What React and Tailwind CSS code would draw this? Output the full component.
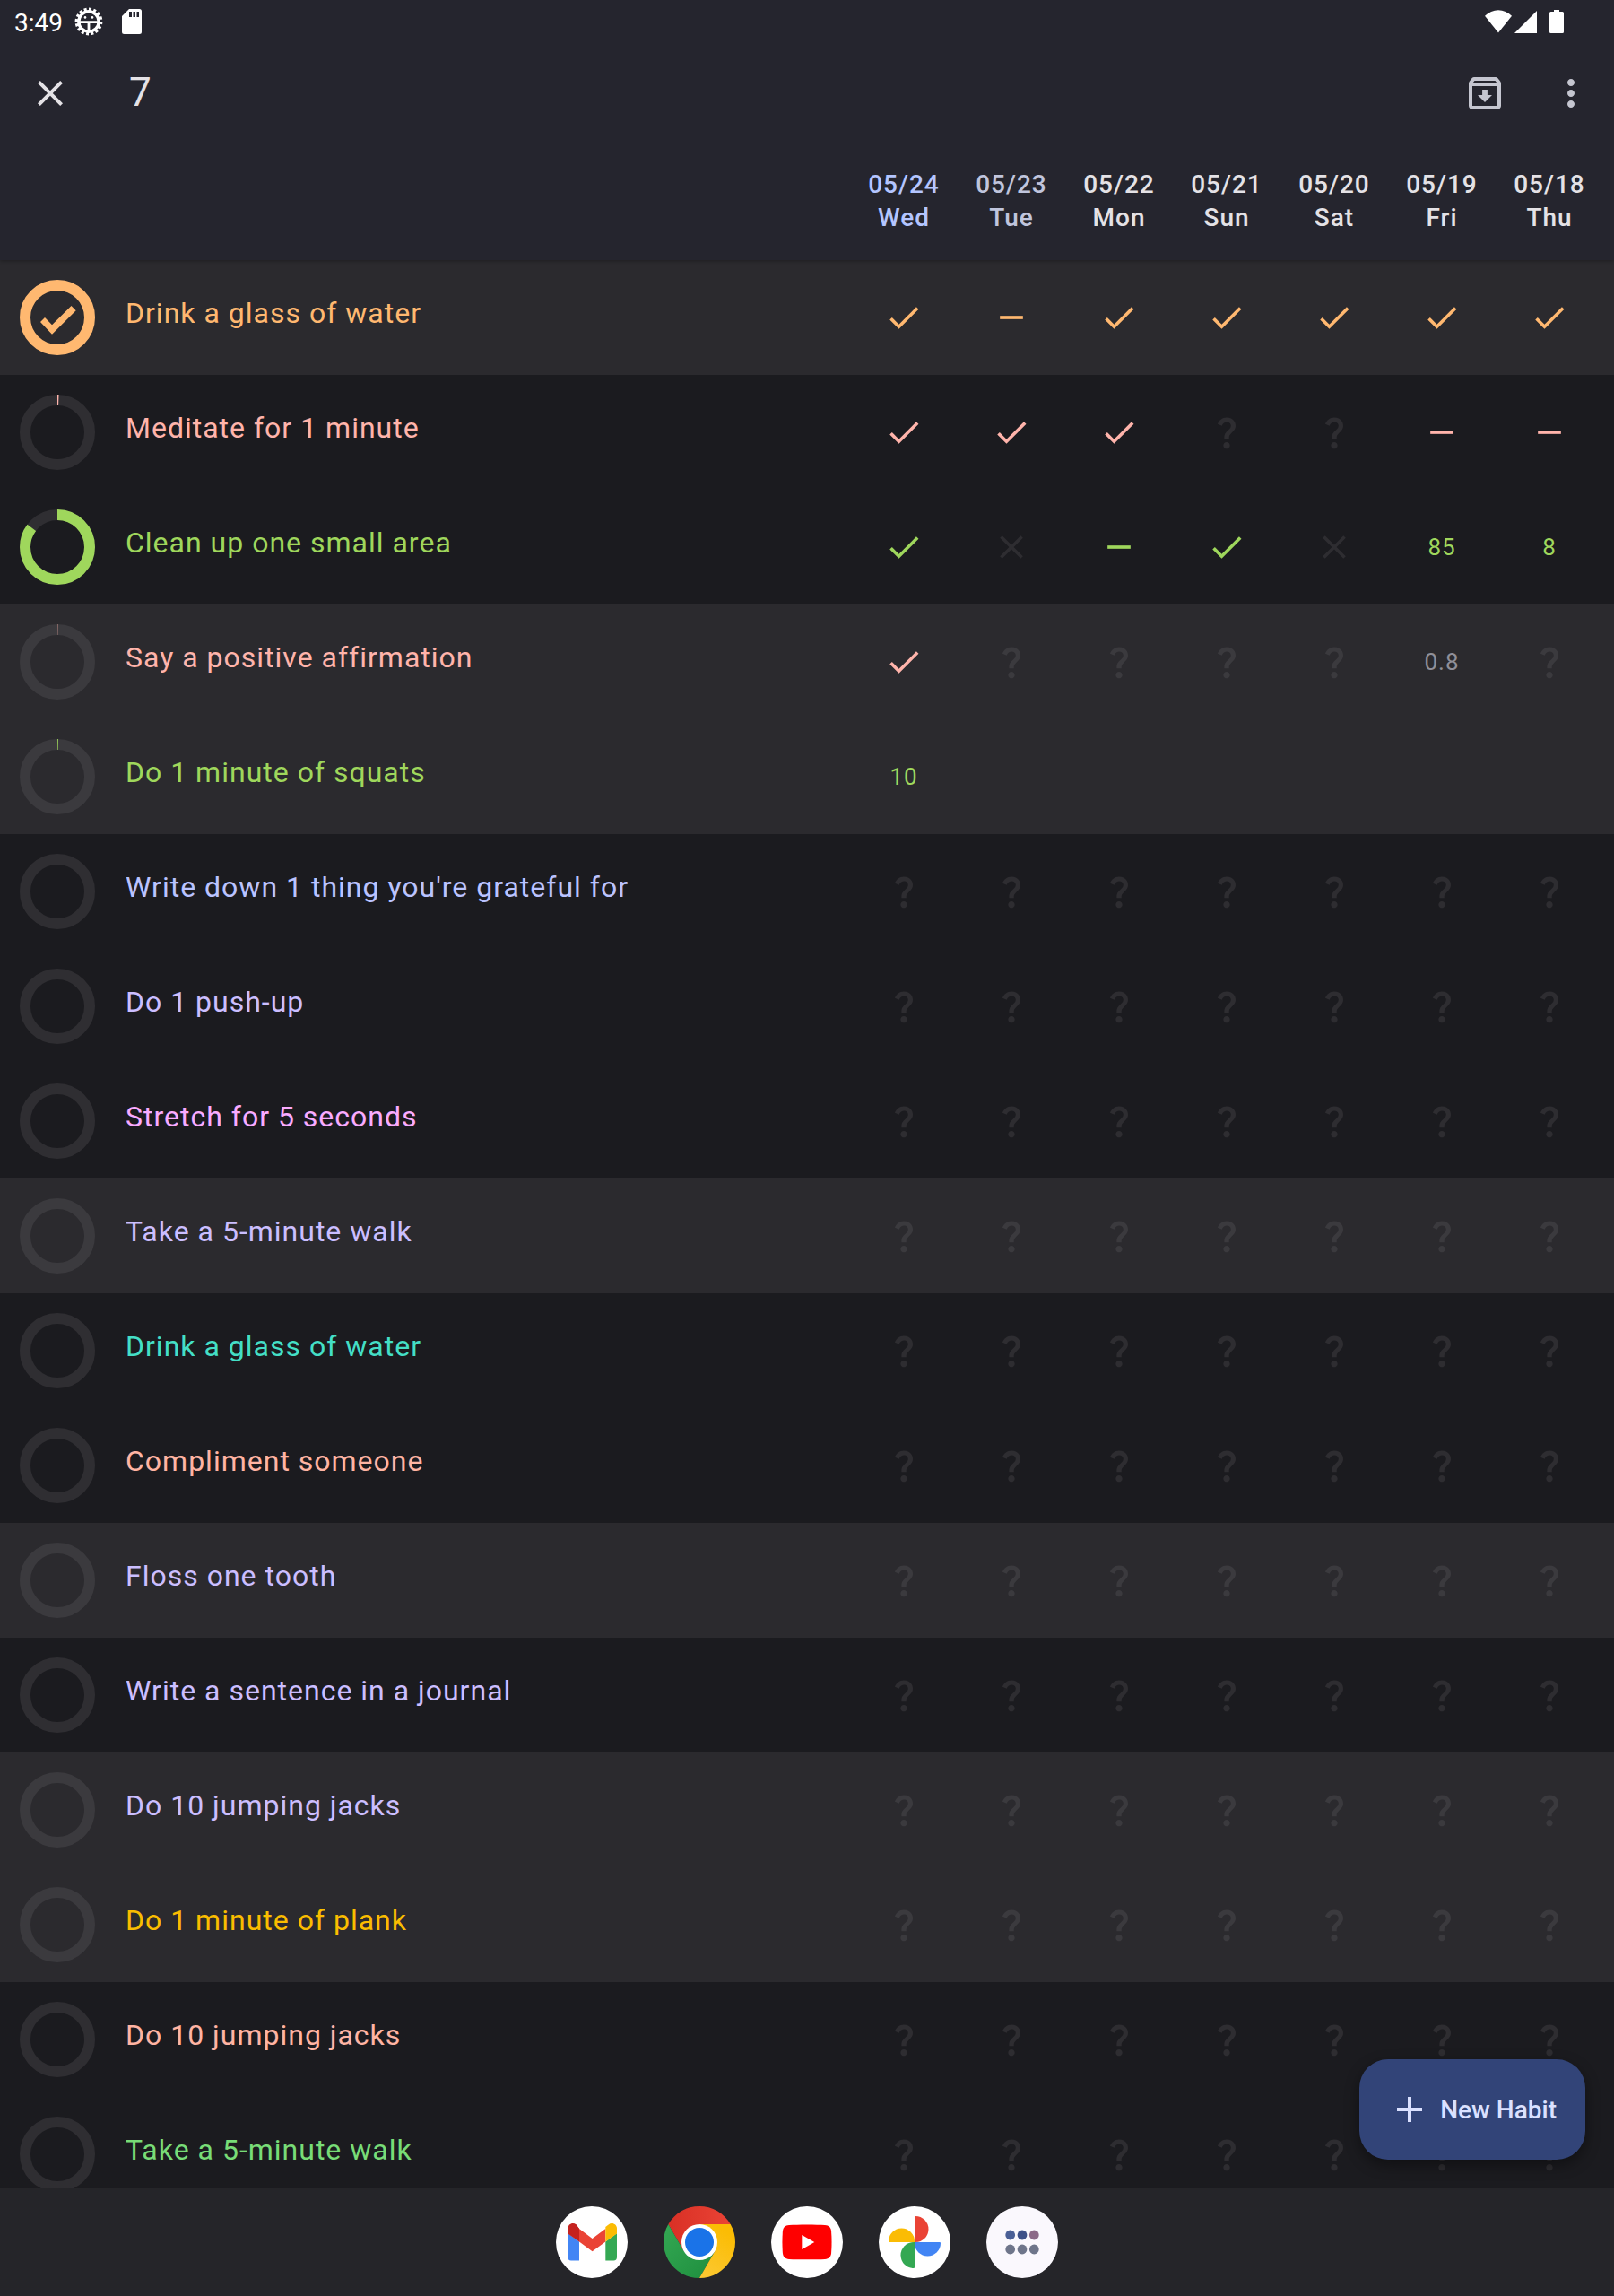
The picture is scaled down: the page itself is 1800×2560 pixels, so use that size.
import React from "react";
import { MdAdd, MdCheck, MdClose, MdMoreVert, MdOutlineArchive, MdQuestionMark, MdRemove } from "react-icons/md";

const days = [
  { date: "05/24", name: "Wed", tone: "text-[#b4c5ff]" },
  { date: "05/23", name: "Tue", tone: "text-[#c0c5dd]" },
  { date: "05/22", name: "Mon", tone: "text-[#e4e2e6]" },
  { date: "05/21", name: "Sun", tone: "text-[#e4e2e6]" },
  { date: "05/20", name: "Sat", tone: "text-[#e4e2e6]" },
  { date: "05/19", name: "Fri", tone: "text-[#e4e2e6]" },
  { date: "05/18", name: "Thu", tone: "text-[#e4e2e6]" },
];

const unknown = ["?", "?", "?", "?", "?", "?", "?"];

const habits = [
  { name: "Drink a glass of water", tone: "text-[#ffb870]", selected: true, progress: 100, entries: ["v", "-", "v", "v", "v", "v", "v"] },
  { name: "Meditate for 1 minute", tone: "text-[#ffb4ab]", progress: 0.6, entries: ["v", "v", "v", "?", "?", "-", "-"] },
  { name: "Clean up one small area", tone: "text-[#9fd75c]", progress: 85.3, entries: ["v", "x", "-", "v", "x", "85", "8"] },
  { name: "Say a positive affirmation", tone: "text-[#ffb4ab]", selected: true, progress: 0.15, entries: ["v", "?", "?", "?", "?", "0.8", "?"] },
  { name: "Do 1 minute of squats", tone: "text-[#9fd75c]", selected: true, progress: 0.35, entries: ["10", "", "", "", "", "", ""] },
  { name: "Write down 1 thing you're grateful for", tone: "text-[#bac3ff]", entries: unknown },
  { name: "Do 1 push-up", tone: "text-[#cbbeff]", entries: unknown },
  { name: "Stretch for 5 seconds", tone: "text-[#f9abff]", entries: unknown },
  { name: "Take a 5-minute walk", tone: "text-[#cbbeff]", selected: true, entries: unknown },
  { name: "Drink a glass of water", tone: "text-[#44dfc6]", entries: unknown },
  { name: "Compliment someone", tone: "text-[#ffb4a3]", entries: unknown },
  { name: "Floss one tooth", tone: "text-[#cbbeff]", selected: true, entries: unknown },
  { name: "Write a sentence in a journal", tone: "text-[#cbbeff]", entries: unknown },
  { name: "Do 10 jumping jacks", tone: "text-[#cbbeff]", selected: true, entries: unknown },
  { name: "Do 1 minute of plank", tone: "text-[#fabd00]", selected: true, entries: unknown },
  { name: "Do 10 jumping jacks", tone: "text-[#ffb4a3]", entries: unknown },
  { name: "Take a 5-minute walk", tone: "text-[#78dc77]", entries: unknown },
];

function ProgressRing({ value = 0, selected }) {
  return (
    <svg viewBox="0 0 84 84" className="size-[84px] shrink-0" aria-hidden="true">
      <circle cx="42" cy="42" r="36" fill="none" strokeWidth="12" className={selected ? "stroke-[#3b3a3e]" : "stroke-[#2f2e32]"} />
      {value > 0 && (
        <circle cx="42" cy="42" r="36" fill="none" stroke="currentColor" strokeWidth="12" pathLength="100" strokeDasharray={`${value} 100`} transform="rotate(-90 42 42)" />
      )}
      {value === 100 && <path d="M23 47l5-5 8 8.3L57.5 29l5.2 5.3L36 60.7z" fill="currentColor" />}
    </svg>
  );
}

const icons = {
  v: { Icon: MdCheck, label: "done" },
  "-": { Icon: MdRemove, label: "skipped" },
  x: { Icon: MdClose, label: "missed" },
  "?": { Icon: MdQuestionMark, label: "no entry" },
};

function Entry({ value, habit, day }) {
  const muted = habit.selected ? "text-[#3b3a3e]" : "text-[#2e2d31]";
  const icon = icons[value];
  let tone = habit.tone;
  if (value === "?" || value === "x") tone = muted;
  if (value === "0.8") tone = "text-[#8f8f99]";
  return (
    <button
      type="button"
      aria-label={`${habit.name}, ${day.date}: ${icon ? icon.label : value || "empty"}`}
      className={`flex h-32 w-full items-center justify-center text-[26px] leading-8 tracking-[1px] ${tone}`}
    >
      {icon ? <icon.Icon className="size-11" /> : value}
    </button>
  );
}

function StatusBar() {
  return (
    <div className="flex h-12 shrink-0 items-center justify-between pl-4 pr-14 text-white">
      <div className="flex items-center">
        <span className="pt-[3px] text-[28px] leading-8">3:49</span>
        <svg viewBox="0 0 32 32" className="ml-[13px] size-8" fill="none" stroke="currentColor" aria-hidden="true">
          <circle cx="16" cy="16" r="13.6" strokeWidth="3.6" pathLength="128" strokeDasharray="4.400 3.600" />
          <circle cx="16" cy="16" r="11.2" strokeWidth="3.4" />
          <path d="M6 16.6h20M16 16.6V27" strokeWidth="2.8" />
          <circle cx="12" cy="11.4" r="1.3" fill="currentColor" stroke="none" />
          <circle cx="20" cy="11.4" r="1.3" fill="currentColor" stroke="none" />
        </svg>
        <svg viewBox="0 0 22 28" className="ml-[21px] h-7 w-[22px]" fill="currentColor" aria-hidden="true">
          <path fillRule="evenodd" d="M8 0h11.500Q22 0 22 2.500v23Q22 28 19.500 28h-17Q0 28 0 25.500V8zM8 3v6h3V3zM12.500 3v6h2.500V3zM16.500 3v6H19V3z" />
        </svg>
      </div>
      <div className="flex items-center">
        <svg viewBox="0 0 30 26" className="h-[26px] w-[30px]" fill="currentColor" aria-hidden="true">
          <path d="M0 6.800C8.500-2 21.500-2 30 6.800L15 25.500z" />
        </svg>
        <svg viewBox="0 0 26 26" className="ml-[2px] size-[26px]" fill="currentColor" aria-hidden="true">
          <path d="M26 1v25H1z" />
        </svg>
        <svg viewBox="0 0 16 26" className="ml-[14px] h-[26px] w-4" fill="currentColor" aria-hidden="true">
          <path d="M5 0h6v2h3.500Q16 2 16 3.500v21q0 1.500-1.500 1.500h-13Q0 26 0 24.500v-21Q0 2 1.500 2H5z" />
        </svg>
      </div>
    </div>
  );
}

function Gmail() {
  return (
    <svg viewBox="0 0 80 80" className="size-20">
      <circle cx="40" cy="40" r="40" fill="#fff" />
      <path d="M13.300 30L26 39.500v21h-9q-3.700 0-3.700-3.700z" fill="#4285f4" />
      <path d="M68 30l-12.700 9.500v21h9q3.700 0 3.700-3.700z" fill="#34a853" />
      <path d="M26 25l14.600 11 14.700-11v14.600L40.600 50.300 26 39.600z" fill="#ea4335" />
      <path d="M13.300 25c0-5 5.400-7.600 9.400-4.600L26 25v14.600l-12.700-9z" fill="#c5221f" />
      <path d="M22 20l4 5v6l-6-8z" fill="#c5221f" />
      <path d="M68 25c0-5-5.400-7.600-9.400-4.600L55.300 23v16.600l12.700-9z" fill="#fbbc04" />
    </svg>
  );
}

function Chrome() {
  return (
    <svg viewBox="0 0 80 80" className="size-20">
      <defs>
        <linearGradient id="chromeRed" x1="0" x2="1"><stop stopColor="#d93025" /><stop offset="1" stopColor="#ea4335" /></linearGradient>
        <linearGradient id="chromeGreen" x1="0" x2="1" y2="1"><stop stopColor="#34a853" /><stop offset="1" stopColor="#1e8e3e" /></linearGradient>
        <linearGradient id="chromeYellow" x1="0" x2="0.4" y1="1" y2="0"><stop stopColor="#fcc934" /><stop offset="1" stopColor="#fbbc04" /></linearGradient>
      </defs>
      <path d="M5.360 20a40 40 0 0 1 69.280 0H40L22.700 50z" fill="url(#chromeRed)" />
      <path d="M5.360 20A40 40 0 0 0 40 80l17.300-30H22.700z" fill="url(#chromeGreen)" />
      <path d="M74.640 20A40 40 0 0 1 40 80l17.300-30L40 20z" fill="url(#chromeYellow)" />
      <circle cx="40" cy="40" r="20" fill="#fff" />
      <circle cx="40" cy="40" r="16" fill="#1a73e8" />
    </svg>
  );
}

function YouTube() {
  return (
    <svg viewBox="0 0 80 80" className="size-20">
      <circle cx="40" cy="40" r="40" fill="#fff" />
      <path d="M40 20.600c8 0 15 .2 20 .5 4.500.3 6.600 2.400 7.100 6.900.6 7 .6 17 0 24-.5 4.500-2.600 6.600-7.100 6.900-10 .6-30 .6-40 0-4.500-.3-6.600-2.400-7.100-6.900-.6-7-.6-17 0-24 .5-4.500 2.600-6.600 7.100-6.900 5-.3 12-.5 20-.5z" fill="#f00" />
      <path d="M34.300 32v16l14-8z" fill="#fff" />
    </svg>
  );
}

function Photos() {
  const petal = "M40 40V12q0-1 1-1a14.500 14.500 0 0 1 0 29z";
  return (
    <svg viewBox="0 0 80 80" className="size-20">
      <circle cx="40" cy="40" r="40" fill="#fff" />
      <path d={petal} fill="#ea4335" />
      <path d={petal} fill="#4285f4" transform="rotate(90 40 40)" />
      <path d={petal} fill="#34a853" transform="rotate(180 40 40)" />
      <path d={petal} fill="#fbbc04" transform="rotate(270 40 40)" />
    </svg>
  );
}

function AllApps() {
  return (
    <svg viewBox="0 0 80 80" className="size-20">
      <circle cx="40" cy="40" r="40" fill="#faf8fd" />
      <circle cx="26.7" cy="32" r="5.400" fill="#4a5f96" />
      <circle cx="40" cy="32" r="5.400" fill="#3d5088" />
      <circle cx="53.3" cy="32" r="5.400" fill="#8c6a88" />
      <circle cx="26.7" cy="48" r="5.400" fill="#6e758a" />
      <circle cx="40" cy="48" r="5.400" fill="#6e758a" />
      <circle cx="53.3" cy="48" r="5.400" fill="#6e758a" />
    </svg>
  );
}

const dock = [
  { label: "Gmail", Logo: Gmail },
  { label: "Chrome", Logo: Chrome },
  { label: "YouTube", Logo: YouTube },
  { label: "Photos", Logo: Photos },
  { label: "All apps", Logo: AllApps },
];

export default function App() {
  return (
    <div className="flex h-screen flex-col overflow-hidden bg-[#1b1b1f] font-['Roboto',sans-serif]">
      <header className="shrink-0 bg-[#25252e]">
        <StatusBar />
        <div className="flex h-28 items-center justify-between px-6">
          <div className="flex items-center">
            <button type="button" aria-label="Clear selection" className="p-2 text-[#e4e2e6]">
              <MdClose className="size-12" />
            </button>
            <h1 className="ml-14 pb-[2px] text-[44px] leading-[52px] text-[#e4e2e6]">7</h1>
          </div>
          <div className="flex items-center gap-10 text-[#c5c6d0]">
            <button type="button" aria-label="Archive" className="p-2">
              <MdOutlineArchive className="size-12" />
            </button>
            <button type="button" aria-label="More options" className="py-2">
              <MdMoreVert className="size-12" />
            </button>
          </div>
        </div>
      </header>

      <main className="relative min-h-0 flex-1">
        <div className="h-full overflow-hidden">
          <table className="w-full table-fixed border-separate border-spacing-0">
            <thead className="relative z-10 bg-[#25252e] shadow-[0_1px_4px_rgba(0,0,0,0.3)]">
              <tr>
                <td />
                {days.map((day) => (
                  <th key={day.date} scope="col" className={`h-[130px] w-[120px] p-0 pb-[2px] text-center align-middle text-[28px] font-medium leading-[37px] tracking-[1px] last:w-[132px] last:pr-3 ${day.tone}`}>
                    {day.date}
                    <br />
                    {day.name}
                  </th>
                ))}
              </tr>
            </thead>
            <tbody>
              {habits.map((habit, i) => (
                <tr key={i} className={habit.selected ? "bg-[#2b2a2e]" : "bg-[#1b1b1f]"}>
                  <th scope="row" className={`p-0 text-left font-normal ${habit.tone}`}>
                    <div className="flex h-32 items-center gap-[34px] pl-[22px]">
                      <ProgressRing value={habit.progress} selected={habit.selected} />
                      <span className="truncate pb-[10px] text-[32px] leading-[48px] tracking-[1px]">{habit.name}</span>
                    </div>
                  </th>
                  {habit.entries.map((value, d) => (
                    <td key={d} className="p-0 last:pr-3">
                      <Entry value={value} habit={habit} day={days[d]} />
                    </td>
                  ))}
                </tr>
              ))}
            </tbody>
          </table>
        </div>
        <button
          type="button"
          className="absolute bottom-8 right-8 flex h-28 items-center gap-[10px] rounded-[32px] bg-[#324478] px-8 text-[28px] font-medium leading-10 text-[#dbe1ff] shadow-[0_6px_16px_rgba(0,0,0,0.4)]"
        >
          <MdAdd className="size-12" />
          <span className="pt-[2px]">New Habit</span>
        </button>
      </main>

      <nav aria-label="Apps" className="flex h-[120px] shrink-0 items-center justify-center gap-10 bg-[#252529]">
        {dock.map(({ label, Logo }) => (
          <button key={label} type="button" aria-label={label}>
            <Logo />
          </button>
        ))}
      </nav>
    </div>
  );
}
